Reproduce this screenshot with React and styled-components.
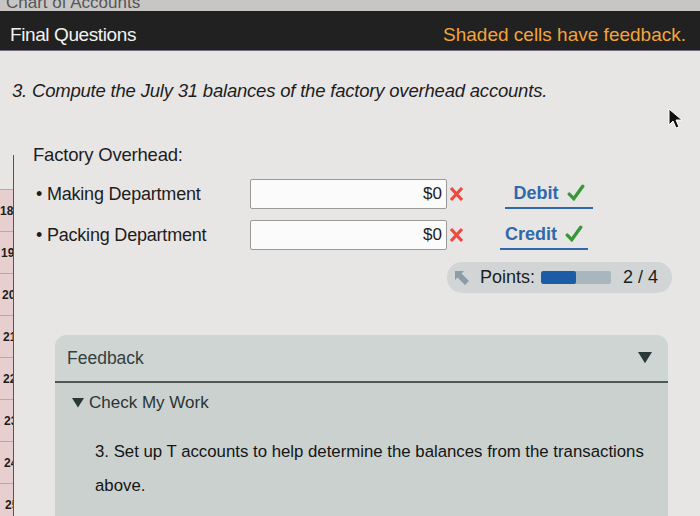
import * as React from 'react';
import styled, {createGlobalStyle} from 'styled-components';

const GlobalStyle = createGlobalStyle`
  html, body {
    margin: 0;
    padding: 0;
    background: #e8e6e5;
    font-family: "Liberation Sans", Arial, sans-serif;
    color: #1d1d1d;
  }
  #root {
    width: 700px;
    height: 516px;
    overflow: hidden;
    position: relative;
  }
`;

const TopStrip = styled.div`
  height: 11px;
  background: #c8c6c5;
  overflow: hidden;
  padding-left: 6px;
  font-size: 17px;
  color: #555;
  line-height: 6px;
`;

const HeaderBar = styled.div`
  height: 40px;
  background: #212121;
  display: flex;
  align-items: center;
  justify-content: space-between;
  padding: 8px 14px 0 10px;
  box-sizing: border-box;
  border-bottom: 1px solid #6f6d80;
`;

const HeaderTitle = styled.div`
  color: #f2f2f2;
  font-size: 19px;
  letter-spacing: -0.4px;
`;

const HeaderNote = styled.div`
  color: #f2a53c;
  font-size: 19px;
`;

const Question = styled.div`
  margin: 29px 0 0 12px;
  font-size: 18.5px;
  font-style: italic;
  letter-spacing: -0.2px;
  height: 26px;
`;

const WorkArea = styled.div`
  display: flex;
  margin-top: 49px;
`;

const RowStrip = styled.div`
  width: 13px;
  flex: none;
  border-right: 1.5px solid #555;
  display: flex;
  flex-direction: column;
  overflow: hidden;
  padding-top: 34px;
  height: 400px;
`;

const RowCell = styled.div`
  height: 42px;
  flex: none;
  background: #e6cfce;
  border-top: 1px solid #b9a8a7;
  font-size: 12px;
  font-weight: bold;
  display: flex;
  align-items: center;
  padding-left: ${p => p.$indent}px;
  white-space: nowrap;
  overflow: hidden;
  box-sizing: border-box;
`;

const Content = styled.div`
  flex: 1;
  padding-left: 19px;
`;

const SectionLabel = styled.div`
  font-size: 18.5px;
  height: 24px;
  line-height: 24px;
  letter-spacing: -0.2px;
  margin-top: -12px;
`;

const Lines = styled.div`
  margin-top: 12px;
  display: flex;
  flex-direction: column;
  gap: 11px;
`;

const LineRow = styled.div`
  display: grid;
  grid-template-columns: 217px 197px 24px 130px;
  align-items: center;
  height: 30px;
`;

const LineLabel = styled.div`
  font-size: 18px;
  letter-spacing: -0.2px;
  padding-left: ${p => p.$indent}px;
`;

const AmountBox = styled.div`
  height: 30px;
  background: #fbfbfb;
  border: 1px solid #9a9a9a;
  border-radius: 2px;
  box-sizing: border-box;
  display: flex;
  align-items: center;
  justify-content: flex-end;
  padding-right: 4px;
  font-size: 17px;
`;

const WrongMark = styled.div`
  display: flex;
  align-items: center;
  padding-left: 2px;
`;

const Choice = styled.div`
  margin-left: ${p => p.$offset}px;
  width: 88px;
  height: 30px;
  display: flex;
  align-items: center;
  justify-content: center;
  gap: 8px;
  border-bottom: 2.5px solid #2f69ac;
  box-sizing: border-box;
  color: #2f69ac;
  font-weight: bold;
  font-size: 18px;
`;

const PointsRow = styled.div`
  display: flex;
  padding-left: 414px;
  margin-top: 12px;
`;

const PointsPill = styled.div`
  width: 225px;
  height: 31px;
  background: #d2d5d5;
  border-radius: 15px;
  display: flex;
  align-items: center;
  padding-left: 8px;
  box-sizing: border-box;
  font-size: 18px;
`;

const PointsLabel = styled.span`
  margin-left: 11px;
`;

const Bar = styled.div`
  width: 70px;
  height: 13px;
  background: #a8b7be;
  border-radius: 2px;
  margin: 0 12px 0 6px;
  overflow: hidden;
`;

const BarFill = styled.div`
  height: 100%;
  background: #1c5ca6;
  border-radius: 2px;
`;

const FeedbackPanel = styled.div`
  margin: 42px 32px 0 22px;
  background: #cad1cf;
  border-radius: 12px 12px 0 0;
  height: 200px;
`;

const FeedbackHeader = styled.div`
  height: 46px;
  display: flex;
  align-items: center;
  justify-content: space-between;
  padding: 0 16px 0 12px;
  border-bottom: 2px solid #4e5857;
  color: #33403f;
  font-size: 17.5px;
  background: #cfd5d3;
  border-radius: 12px 12px 0 0;
`;

const Toggle = styled.div`
  display: flex;
  align-items: center;
  gap: 5px;
  padding: 10px 0 0 17px;
  font-size: 17px;
  color: #2a3433;
`;

const FeedbackText = styled.div`
  padding: 22px 20px 0 40px;
  font-size: 16.8px;
  line-height: 34px;
  color: #151515;
`;

const Cursor = styled.svg`
  position: absolute;
  left: 668px;
  top: 108px;
`;

const Triangle = ({size, color}) => (
  <svg width={size} height={size * 0.8} viewBox="0 0 10 8">
    <path d="M0 0 L10 0 L5 8 Z" fill={color} />
  </svg>
);

const Check = () => (
  <svg width="18" height="18" viewBox="0 0 16 16">
    <path d="M2 9 L6 13 L14 2" fill="none" stroke="#36983a" strokeWidth="3" strokeLinecap="round" />
  </svg>
);

const Cross = () => (
  <svg width="15" height="16" viewBox="0 0 15 16">
    <path d="M2 2 L13 14 M13 2 L2 14" fill="none" stroke="#ec4a3f" strokeWidth="3.2" />
  </svg>
);

const PointsIcon = () => (
  <svg width="14" height="14" viewBox="0 0 14 14">
    <path d="M0 0 L9 0 L6.5 2.5 L14 10 L10 14 L2.5 6.5 L0 9 Z" fill="#8c9ca6" />
  </svg>
);

const rows = [
  {label: 'Making Department', indent: 3, result: 'Debit', offset: 34},
  {label: 'Packing Department', indent: 3, result: 'Credit', offset: 29},
];

const stripRows = [
  {n: '18', indent: 0},
  {n: '19', indent: 1},
  {n: '20', indent: 2},
  {n: '21', indent: 3},
  {n: '22', indent: 3},
  {n: '23', indent: 4},
  {n: '24', indent: 4},
  {n: '25', indent: 5},
  {n: '26', indent: 5},
];

export default function App() {
  return (
    <React.Fragment>
      <GlobalStyle />
      <TopStrip>Chart of Accounts</TopStrip>
      <HeaderBar>
        <HeaderTitle>Final Questions</HeaderTitle>
        <HeaderNote>Shaded cells have feedback.</HeaderNote>
      </HeaderBar>
      <Question>3. Compute the July 31 balances of the factory overhead accounts.</Question>
      <WorkArea>
        <RowStrip>
          {stripRows.map(r => (
            <RowCell key={r.n} $indent={r.indent}>{r.n}</RowCell>
          ))}
        </RowStrip>
        <Content>
          <SectionLabel>Factory Overhead:</SectionLabel>
          <Lines>
            {rows.map(r => (
              <LineRow key={r.label}>
                <LineLabel $indent={r.indent}>• {r.label}</LineLabel>
                <AmountBox>$0</AmountBox>
                <WrongMark><Cross /></WrongMark>
                <Choice $offset={r.offset}>
                  {r.result} <Check />
                </Choice>
              </LineRow>
            ))}
          </Lines>
          <PointsRow>
            <PointsPill>
              <PointsIcon />
              <PointsLabel>Points:</PointsLabel>
              <Bar>
                <BarFill style={{width: `${(2 / 4) * 100}%`}} />
              </Bar>
              <span>2 / 4</span>
            </PointsPill>
          </PointsRow>
          <FeedbackPanel>
            <FeedbackHeader>
              <span>Feedback</span>
              <Triangle size={14} color="#2b3838" />
            </FeedbackHeader>
            <Toggle>
              <Triangle size={12} color="#2b3838" />
              <span>Check My Work</span>
            </Toggle>
            <FeedbackText>
              3. Set up T accounts to help determine the balances from the transactions above.
            </FeedbackText>
          </FeedbackPanel>
        </Content>
      </WorkArea>
      <Cursor width="16" height="22" viewBox="0 0 16 22">
        <path d="M1 1 L1 17 L5 13 L8 20 L11 19 L8 12 L14 12 Z" fill="#111" stroke="#fff" strokeWidth="1" />
      </Cursor>
    </React.Fragment>
  );
}
